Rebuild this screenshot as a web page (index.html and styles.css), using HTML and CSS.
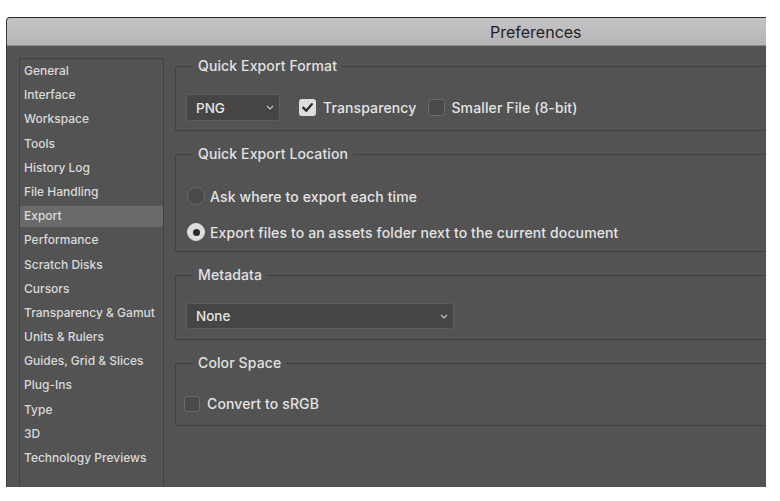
FILE: index.html
```html
<!DOCTYPE html>
<html lang="en">
<head>
<meta charset="utf-8">
<title>Preferences</title>
<link rel="stylesheet" href="styles.css">
</head>
<body>
<div class="window">
  <div class="titlebar"><span class="title">Preferences</span></div>
  <div class="body">
    <ul class="sidebar">
      <li>General</li>
      <li>Interface</li>
      <li>Workspace</li>
      <li>Tools</li>
      <li>History Log</li>
      <li>File Handling</li>
      <li class="active">Export</li>
      <li>Performance</li>
      <li>Scratch Disks</li>
      <li>Cursors</li>
      <li>Transparency &amp; Gamut</li>
      <li>Units &amp; Rulers</li>
      <li>Guides, Grid &amp; Slices</li>
      <li>Plug-Ins</li>
      <li>Type</li>
      <li>3D</li>
      <li>Technology Previews</li>
    </ul>
    <div class="panel">
      <fieldset class="group g-format">
        <legend>Quick Export Format</legend>
        <div class="row">
          <div class="select select-format">
            <span>PNG</span>
            <svg class="chev" width="8" height="5" viewBox="0 0 8 5"><polyline points="1,1 4,4 7,1" fill="none" stroke="#c4c4c4" stroke-width="1.2"/></svg>
          </div>
          <label class="check check-first"><span class="box checked"><svg width="17" height="17" viewBox="0 0 17 17"><path d="M4.2 8.6 L7.2 11.8 L12.8 5.2" fill="none" stroke="#2e2e2e" stroke-width="2.3" stroke-linecap="round" stroke-linejoin="round"/></svg></span>Transparency</label>
          <label class="check check-second"><span class="box"></span>Smaller File (8-bit)</label>
        </div>
      </fieldset>
      <fieldset class="group g-location">
        <legend>Quick Export Location</legend>
        <div class="radios">
          <label class="radio"><span class="dot"></span>Ask where to export each time</label>
          <label class="radio"><span class="dot on"><span class="pip"></span></span>Export files to an assets folder next to the current document</label>
        </div>
      </fieldset>
      <fieldset class="group g-meta">
        <legend>Metadata</legend>
        <div class="select select-meta">
          <span>None</span>
          <svg class="chev" width="8" height="5" viewBox="0 0 8 5"><polyline points="1,1 4,4 7,1" fill="none" stroke="#c4c4c4" stroke-width="1.2"/></svg>
        </div>
      </fieldset>
      <fieldset class="group g-color">
        <legend>Color Space</legend>
        <label class="check check-color"><span class="box small"></span>Convert to sRGB</label>
      </fieldset>
    </div>
  </div>
</div>
</body>
</html>
```
FILE: styles.css
```css
* { box-sizing: border-box; }

html, body { background: #ffffff; }

body {
  margin: 0;
  padding: 17px 0 0 6px;
  font-family: Inter, "Noto Sans", "Liberation Sans", sans-serif;
  overflow: hidden;
}

.window {
  width: 760px;
  height: 470px;
  overflow: hidden;
  background: #535353;
  border-top: 1px solid #2a2a2a;
  border-left: 1px solid #3a3a3a;
  border-top-left-radius: 4px;
  display: flex;
  flex-direction: column;
}

.titlebar {
  height: 28px;
  flex-shrink: 0;
  background: linear-gradient(#c5c3c5, #b6b4b6);
  border-bottom: 1px solid #8e8c8e;
  padding-left: 483px;
  display: flex;
  align-items: center;
}

.title {
  font-size: 16px;
  color: #222222;
}

.body {
  flex: 1;
  display: flex;
  gap: 11px;
  padding: 12px 0 0 12px;
  min-height: 0;
}

.sidebar {
  list-style: none;
  margin: 0;
  padding: 0;
  width: 145px;
  height: 450px;
  flex-shrink: 0;
  border: 1px solid #404040;
}

.sidebar li {
  height: 24.2px;
  line-height: 24.2px;
  padding-left: 4px;
  font-size: 12px;
  font-weight: 500;
  color: #dadada;
  white-space: nowrap;
}

.sidebar li.active {
  background: linear-gradient(#6a6a6a, #6a6a6a) 0 1.5px / 100% 21px no-repeat;
}

.panel {
  flex: 1;
  margin-right: -40px;
  display: flex;
  flex-direction: column;
  gap: 15px;
}

.group {
  margin: 0;
  min-width: 0;
  border: 1px solid #404040;
  border-radius: 2px;
  padding: 20px 10px 10px 10px;
}

.group legend {
  padding: 0 5px;
  margin-left: 7px;
  font-size: 14px;
  line-height: 16px;
  font-weight: 500;
  letter-spacing: 0.12px;
  color: #e2e2e2;
}

.g-format { padding-bottom: 9px; }
.g-location { padding-top: 24px; padding-bottom: 9px; }
.g-meta { padding-top: 20px; padding-bottom: 10px; }
.g-color { padding: 23px 10px 11px 8px; }
.g-color legend { margin-left: 9px; }

.row {
  display: flex;
  align-items: center;
  height: 27px;
}

.select {
  display: flex;
  align-items: center;
  justify-content: space-between;
  padding: 0 5px 0 9px;
  background: #454545;
  border: 1px solid #5d5d5d;
  border-radius: 3px;
  font-size: 13.5px;
  font-weight: 500;
  color: #e6e6e6;
}

.select-format { width: 94px; height: 27px; }
.select-meta { width: 268px; height: 26px; }

.chev { display: block; }

.check {
  display: flex;
  align-items: center;
  gap: 7px;
  font-size: 14px;
  font-weight: 500;
  letter-spacing: 0.12px;
  line-height: 20px;
  color: #e4e4e4;
  white-space: nowrap;
}

.check-first { margin-left: 19px; }
.check-second { margin-left: 12px; gap: 6px; }
.check-color { gap: 7px; height: 20px; }

.box {
  width: 17px;
  height: 17px;
  flex-shrink: 0;
  border-radius: 3px;
  border: 1px solid #6c6c6c;
  background: #4a4a4a;
}

.box.small { width: 16px; height: 16px; }

.box.checked {
  background: #dedede;
  border: 0;
}

.box svg { display: block; }

.radios {
  display: flex;
  flex-direction: column;
  gap: 16px;
}

.radio {
  display: flex;
  align-items: center;
  gap: 5px;
  height: 20px;
  padding-left: 1px;
  font-size: 14px;
  font-weight: 500;
  letter-spacing: 0.12px;
  color: #e4e4e4;
  white-space: nowrap;
}

.dot {
  width: 18px;
  height: 18px;
  flex-shrink: 0;
  border-radius: 50%;
  border: 1px solid #6c6c6c;
  background: #4a4a4a;
  display: flex;
  align-items: center;
  justify-content: center;
}

.dot.on {
  background: #dedede;
  border-color: #dedede;
}

.pip {
  width: 7px;
  height: 7px;
  border-radius: 50%;
  background: #2a2a2a;
}
```
